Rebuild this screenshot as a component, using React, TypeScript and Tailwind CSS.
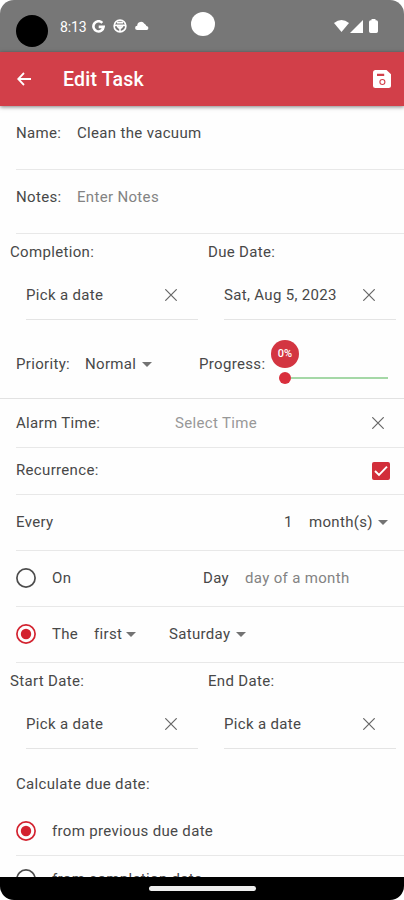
import type { ReactNode } from "react";

const CloseIcon = () => (
  <svg className="block h-3 w-3 shrink-0" viewBox="0 0 12 12" fill="none" stroke="#666666" strokeWidth="1.2">
    <path d="M.3 .3l11.4 11.4M11.7 .3l-11.4 11.4" />
  </svg>
);

const Caret = () => (
  <svg className="block h-[5px] w-[10px] shrink-0" viewBox="0 0 10 5">
    <path d="M0 0h10L5 5z" fill="#737373" />
  </svg>
);

const Radio = ({ checked = false }: { checked?: boolean }) => (
  <svg className="mb-px block h-5 w-5 shrink-0" viewBox="0 0 20 20">
    <circle cx="10" cy="10" r="9.1" fill="none" strokeWidth="1.7" stroke={checked ? "#d3222f" : "#4c4c4c"} />
    {checked && <circle cx="10" cy="10" r="5.2" fill="#d3222f" />}
  </svg>
);

const StatusBar = () => (
  <div className="flex h-[52px] shrink-0 items-start bg-[#777777] text-white">
    <div className="ml-4 mt-[15px] h-8 w-8 rounded-full bg-black" />
    <span className="ml-3 mt-[17px] w-8 text-[14px] leading-[20px] tracking-[-0.1px]">8:13</span>
    <svg className="mt-5 h-[13px] w-[13px]" viewBox="0 0 13 13" fill="none" stroke="white" strokeWidth="2.6">
      <path d="M10.3 2.9A5.1 5.1 0 1 0 11.6 6.9H6.7" />
    </svg>
    <svg className="ml-2 mt-[19px] h-[14px] w-[14px]" viewBox="0 0 14 14" fill="none" stroke="white" strokeWidth="1.6">
      <circle cx="7" cy="7" r="5.9" />
      <path d="M1 6.4h12M7 7v6M4 3.6h6M4.6 6.6q.2 2.4 2.4 2.4t2.4-2.4" />
    </svg>
    <svg className="ml-2 mt-[21px] h-[9px] w-[14px]" viewBox="0 0 14 9" fill="white">
      <path d="M2.2 9A2.1 2.1 0 0 1 2.2 4.8A3.9 3.9 0 0 1 9.4 2.7A3.2 3.2 0 0 1 11.4 5.1A2 2 0 0 1 12 9z" />
    </svg>
    <div className="ml-[42px] mt-3 h-6 w-6 rounded-full bg-white" />
    <svg className="ml-auto mt-5 h-3 w-[15px]" viewBox="0 0 15 12" fill="white">
      <path d="M7.5 12L0 3Q7.5-3 15 3z" />
    </svg>
    <svg className="mt-5 ml-px h-[13px] w-[13px]" viewBox="0 0 13 13" fill="white">
      <path d="M0 13L13 0v13z" />
    </svg>
    <svg className="ml-[6px] mr-[26px] mt-[19px] h-[14px] w-[9px]" viewBox="0 0 9 14" fill="white">
      <path d="M2.5 1.2V0h4v1.2H7.3Q9 1.2 9 3v9.2Q9 14 7.3 14H1.7Q0 14 0 12.2V3Q0 1.2 1.7 1.2z" />
    </svg>
  </div>
);

const Header = () => (
  <div className="relative z-10 flex h-[54px] shrink-0 items-center bg-[#d23f49] pl-[17px] pr-[13px] text-white shadow-[0_1px_4px_rgba(0,0,0,0.5)]">
    <svg className="h-[14px] w-[14px]" viewBox="0 0 14 14" fill="none" stroke="white" strokeWidth="1.8">
      <path d="M14 7H1.4M7 1L1.2 7L7 13" />
    </svg>
    <h1 className="ml-8 pt-px text-[19.5px] font-medium leading-6 tracking-[0.2px]">Edit Task</h1>
    <svg className="ml-auto h-[18px] w-[18px]" viewBox="0 0 18 18">
      <path d="M2.5 0H13.5L18 4.2V15.5Q18 18 15.5 18H2.5Q0 18 0 15.5V2.5Q0 0 2.5 0z" fill="white" />
      <path d="M4 3.8h7.2v2.2H4z" fill="#d23f49" />
      <circle cx="9.4" cy="12" r="2.5" fill="none" stroke="#d23f49" strokeWidth="1.1" />
    </svg>
  </div>
);

const DateField = ({ label, value }: { label: string; value: string }) => (
  <div className="w-[198px] pl-[10px]">
    <div className="h-[36px] pt-2 leading-5">{label}</div>
    <div className="ml-4 flex h-[50px] w-[172px] items-center border-b border-[#e4e4e4] pr-[21px]">
      <span className="flex-1 pt-[2px]">{value}</span>
      <CloseIcon />
    </div>
  </div>
);

const Row = ({ className, children }: { className: string; children: ReactNode }) => (
  <div className={`ml-4 flex shrink-0 items-center border-b border-[#e8e8e8] ${className}`}>{children}</div>
);

const App = () => {
  return (
    <div className="h-[900px] w-[404px] bg-white">
      <div className="flex h-full w-full flex-col overflow-hidden rounded-[14px] bg-[#fefefe] font-[Roboto,sans-serif] text-[15px] tracking-[0.33px] text-[#484848]">
        <StatusBar />
        <Header />

        {/* Form */}
        <div className="flex min-h-0 flex-1 flex-col overflow-hidden">
          <Row className="h-16 pb-2">
            <span className="w-[61px]">Name:</span>
            <span>Clean the vacuum</span>
          </Row>
          <Row className="h-16 pb-2">
            <span className="w-[61px]">Notes:</span>
            <span className="text-[#838383]">Enter Notes</span>
          </Row>

          <div className="flex h-[86px] shrink-0">
            <DateField label="Completion:" value="Pick a date" />
            <DateField label="Due Date:" value="Sat, Aug 5, 2023" />
          </div>

          {/* Priority and progress */}
          <div className="flex h-[79px] shrink-0 items-center border-b border-[#e2e2e2] pl-4 pt-[10px]">
            <span className="w-[69px]">Priority:</span>
            <span className="w-[57px]">Normal</span>
            <Caret />
            <span className="ml-[47px] w-[72px]">Progress:</span>
            <div className="mb-1 flex w-[117px] flex-col items-start">
              <div className="flex h-7 w-7 items-center justify-center rounded-full bg-[#d33541] text-[11px] font-medium tracking-normal text-white">
                0%
              </div>
              <div className="ml-2 mt-1 flex w-[109px] items-center">
                <div className="h-3 w-3 rounded-full bg-[#d92e3c]" />
                <div className="h-[1.5px] flex-1 bg-[#a5d8a7]" />
              </div>
            </div>
          </div>

          <Row className="h-[49px] pr-5">
            <span className="w-[159px]">Alarm Time:</span>
            <span className="flex-1 text-[#989898]">Select Time</span>
            <CloseIcon />
          </Row>
          <Row className="h-[47px] pr-[14px]">
            <span className="flex-1 pb-[2px]">Recurrence:</span>
            <svg className="h-[18px] w-[18px]" viewBox="0 0 18 18">
              <rect width="18" height="18" rx="2" fill="#d22e3a" />
              <path d="M3 9l4 4 8-8.3" fill="none" stroke="white" strokeWidth="1.9" />
            </svg>
          </Row>
          <Row className="h-[56px] pr-4">
            <span className="flex-1">Every</span>
            <span className="w-[25px]">1</span>
            <span className="w-[69px]">month(s)</span>
            <Caret />
          </Row>
          <Row className="h-[56px]">
            <Radio />
            <span className="ml-4 w-[151px]">On</span>
            <span className="w-[42px]">Day</span>
            <span className="text-[#838383]">day of a month</span>
          </Row>
          <Row className="h-[56px]">
            <Radio checked />
            <span className="ml-4 w-[42px]">The</span>
            <span className="w-[32px]">first</span>
            <Caret />
            <span className="ml-[33px] w-[67px]">Saturday</span>
            <Caret />
          </Row>

          <div className="flex h-[86px] shrink-0">
            <DateField label="Start Date:" value="Pick a date" />
            <DateField label="End Date:" value="Pick a date" />
          </div>

          <div className="ml-4 h-[59px] shrink-0 pt-[25px] leading-5">Calculate due date:</div>
          <Row className="h-[48px]">
            <Radio checked />
            <span className="ml-4">from previous due date</span>
          </Row>
          <Row className="h-[48px]">
            <Radio />
            <span className="ml-4">from completion date</span>
          </Row>
        </div>

        {/* Navigation bar */}
        <div className="flex h-[23px] shrink-0 justify-center bg-black pt-[9px]">
          <div className="h-[5px] w-[107px] rounded-full bg-[#eeeeee]" />
        </div>
      </div>
    </div>
  );
};

export default App;
